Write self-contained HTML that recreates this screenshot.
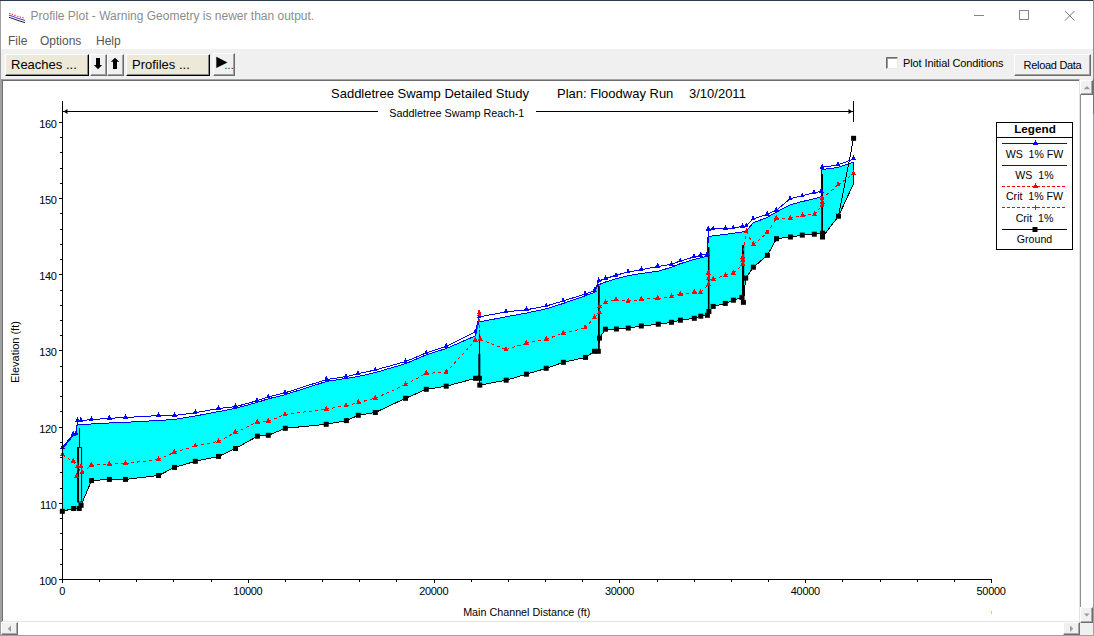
<!DOCTYPE html>
<html lang="en">
<head>
<meta charset="utf-8">
<title>Profile Plot - Warning Geometry is newer than output.</title>
<style>
html,body{margin:0;padding:0;width:1094px;height:636px;overflow:hidden;background:#f0f0f0;}
body{position:relative;font-family:"Liberation Sans",Arial,sans-serif;color:#000;}
#win{position:absolute;left:0;top:0;width:1094px;height:636px;background:#f0f0f0;overflow:hidden;}
#titlebar{position:absolute;left:0;top:0;width:1094px;height:31px;background:#fff;border-top:1px solid #2b3a4a;box-sizing:border-box;}
#title{position:absolute;left:30.5px;top:8px;font-size:12px;line-height:14px;color:#8c8c8c;white-space:nowrap;}
#menubar{position:absolute;left:0;top:31px;width:1094px;height:18px;background:#fff;}
#menubar span{position:absolute;top:3px;font-size:12px;line-height:14px;color:#555;}
#toolbar{position:absolute;left:0;top:49px;width:1094px;height:30px;background:#f0f0f0;}
.btn{position:absolute;box-sizing:border-box;background:#ece9d8;border:1px solid;border-color:#fff #000 #000 #fff;box-shadow:inset -1px -1px 0 #8a8a8a;font-size:13px;line-height:19px;white-space:nowrap;}
.sbtn{position:absolute;box-sizing:border-box;background:#f0f0f0;border:1px solid;border-color:#fff #6d6d6d #6d6d6d #fff;box-shadow:inset -1px -1px 0 #a0a0a0;}
#plotwrap{position:absolute;left:2px;top:79px;width:1078px;height:543px;background:#fff;box-sizing:border-box;border-top:1px solid #a4a4a4;border-left:1px solid #6e6e6e;border-right:1.4px solid #e3e3e3;box-shadow:inset 0 1px 0 #6e6e6e;}
.sb{position:absolute;background:#fff;}
.sbb{position:absolute;box-sizing:border-box;background:#f0f0f0;border:1px solid;border-color:#fff #6e6e6e #6e6e6e #fff;box-shadow:inset -1px -1px 0 #a8a8a8;}
</style>
</head>
<body>
<div id="win">
<div id="titlebar">
<svg style="position:absolute;left:8px;top:9px" width="18" height="14" viewBox="0 0 18 14"><path d="M1 3.2l4 1.3l4 1.5l4 1.2l4 1.2" stroke="#ff3030" stroke-width="1.1" fill="none" stroke-dasharray="1.5 1.3"/><path d="M1 5.2l4 1.2l4 1.6l4 1.2l4 1.3" stroke="#3838f0" stroke-width="1" fill="none"/><path d="M1 7.3l4 1.3l4 1.5l4 1.3l4 1.2" stroke="#222" stroke-width="1" fill="none"/></svg>
<div id="title">Profile Plot - Warning Geometry is newer than output.</div>
<svg style="position:absolute;left:960px;top:0" width="134" height="30" viewBox="960 0 134 30" fill="none" stroke="#858585" stroke-width="1" shape-rendering="crispEdges"><line x1="974" y1="14.5" x2="984" y2="14.5"/><rect x="1019.5" y="9.5" width="9" height="9"/><path d="M1065 10l9.5 9.5M1074.5 10l-9.5 9.5" shape-rendering="auto" stroke="#777"/></svg>
</div>
<div id="menubar"><span style="left:8px">File</span><span style="left:40px">Options</span><span style="left:96px">Help</span></div>
<div id="toolbar">
<div class="btn" style="left:5px;top:5px;width:84px;height:22px;padding-left:5px">Reaches ...</div>
<div class="sbtn" style="left:90px;top:5px;width:17px;height:22px"><svg width="15" height="20" viewBox="0 0 15 20" style="display:block"><path d="M5 2.9h4v7.2h2.1l-4.1 4.1l-4.1-4.1h2.1z" fill="#000"/></svg></div>
<div class="sbtn" style="left:107px;top:5px;width:17px;height:22px"><svg width="15" height="20" viewBox="0 0 15 20" style="display:block"><path d="M7 2.8l4.2 4h-2.2v7.2h-4v-7.2h-2.2z" fill="#000"/></svg></div>
<div class="btn" style="left:126px;top:5px;width:84px;height:22px;padding-left:5px">Profiles ...</div>
<div class="sbtn" style="left:213px;top:4px;width:22px;height:23px"><svg width="20" height="21" viewBox="0 0 20 21" style="display:block"><path d="M2.3 2.8l11.2 5.6l-11.2 5.6z" fill="#000"/><text x="10.6" y="15.2" font-size="10" letter-spacing="0.25" font-family="'Liberation Sans',sans-serif" fill="#000">...</text></svg></div>
<div style="position:absolute;left:886px;top:8px;width:12px;height:12px;box-sizing:border-box;background:#fff;border:1px solid;border-color:#6a6a6a #e8e8e8 #e8e8e8 #6a6a6a;box-shadow:inset 1px 1px 0 #9a9a9a"></div>
<div style="position:absolute;left:903px;top:7.6px;font-size:11px;line-height:13px;white-space:nowrap;letter-spacing:-0.1px">Plot Initial Conditions</div>
<div class="sbtn" style="left:1014px;top:5px;width:77px;height:22px;font-size:11px;line-height:20px;text-align:center;letter-spacing:-0.3px">Reload Data</div>
</div>
<div id="plotwrap"></div>
<svg id="plot" width="1075" height="541" viewBox="3 81 1075 541" style="position:absolute;left:3px;top:81px" font-family="'Liberation Sans',Arial,sans-serif">
<polygon points="62.5,449.0 73.2,435.5 75.9,435.0 77.3,424.3 91.3,424.0 109.3,423.0 125.5,422.3 158.5,420.5 174.5,419.4 195.3,416.0 218.5,411.6 235.3,408.4 257.2,402.4 268.3,398.8 285.0,394.7 326.3,381.5 346.2,378.4 358.2,376.5 375.2,372.6 405.5,363.7 426.2,354.9 446.2,348.5 475.2,336.0 478.8,322.0 506.1,316.8 526.4,313.1 546.2,308.8 563.1,303.5 585.1,295.8 594.5,292.5 597.5,286.4 598.5,284.8 605.5,282.0 616.0,278.7 628.1,275.7 641.3,273.5 658.3,271.2 671.5,267.2 680.3,263.7 694.0,259.5 707.2,256.2 708.4,236.4 725.4,234.4 742.5,232.0 746.3,230.9 753.3,222.8 767.1,217.5 776.4,212.0 790.2,204.8 802.3,201.5 814.2,198.8 821.3,196.6 822.0,169.6 838.1,167.4 853.5,162.1 853.5,183.7 838.5,216.2 838.5,216.2 822.5,237.0 822.5,233.2 814.3,234.2 802.3,235.1 790.4,237.0 776.5,238.7 767.4,255.3 753.4,267.2 745.7,278.1 743.4,302.3 741.9,297.4 733.4,300.2 725.3,303.4 713.2,306.4 708.9,311.5 707.4,315.3 700.8,316.2 694.3,318.3 680.4,320.2 671.5,322.3 658.3,324.2 641.3,326.0 628.3,328.1 616.4,329.0 605.4,329.2 599.5,338.1 598.3,351.3 594.5,351.3 585.5,357.4 563.4,362.3 546.2,368.3 526.4,374.2 506.2,380.2 479.8,385.1 479.4,378.3 475.5,378.3 446.2,386.2 426.3,389.3 405.5,398.3 375.3,412.5 358.3,415.3 346.4,420.6 326.2,424.3 285.3,428.3 268.3,435.3 257.4,436.2 235.5,448.5 218.5,456.4 195.3,461.3 174.5,467.4 158.5,475.5 125.5,479.4 109.4,479.4 91.5,480.6 81.1,505.3 79.2,508.5 73.6,508.5 62.3,511.3" fill="#00ffff"/>
<polyline points="853.5,162.1 853.5,183.7 838.5,216.2" fill="none" stroke="#000" stroke-width="1" shape-rendering="crispEdges"/>
<polyline points="62.5,449.0 73.2,435.5 75.9,435.0 77.3,424.3 91.3,424.0 109.3,423.0 125.5,422.3 158.5,420.5 174.5,419.4 195.3,416.0 218.5,411.6 235.3,408.4 257.2,402.4 268.3,398.8 285.0,394.7 326.3,381.5 346.2,378.4 358.2,376.5 375.2,372.6 405.5,363.7 426.2,354.9 446.2,348.5 475.2,336.0 478.8,322.0 506.1,316.8 526.4,313.1 546.2,308.8 563.1,303.5 585.1,295.8 594.5,292.5 597.5,286.4 598.5,284.8 605.5,282.0 616.0,278.7 628.1,275.7 641.3,273.5 658.3,271.2 671.5,267.2 680.3,263.7 694.0,259.5 707.2,256.2 708.4,236.4 725.4,234.4 742.5,232.0 746.3,230.9 753.3,222.8 767.1,217.5 776.4,212.0 790.2,204.8 802.3,201.5 814.2,198.8 821.3,196.6 822.0,169.6 838.1,167.4 853.5,162.1" fill="none" stroke="#0000ff" stroke-width="1" shape-rendering="crispEdges"/>
<polyline points="62.5,447.6 73.2,434.0 75.9,433.5 77.6,420.5 80.9,420.4 91.3,419.7 109.3,418.3 125.5,417.5 158.5,415.6 174.5,415.5 195.3,412.7 218.5,408.5 235.3,406.7 257.2,400.7 268.3,396.8 285.0,392.8 326.3,379.6 346.2,376.6 358.2,373.7 375.2,370.0 405.5,361.6 426.2,352.9 446.2,346.3 475.2,332.0 479.1,317.0 506.1,311.8 526.4,309.8 546.2,306.0 563.1,301.0 585.1,294.0 594.5,291.0 598.6,281.0 605.5,278.7 616.0,275.2 628.1,272.0 641.3,269.7 657.8,266.5 671.5,264.2 680.3,261.0 694.0,257.0 700.6,255.3 707.2,254.2 708.4,229.2 713.3,228.8 725.4,228.6 733.3,228.0 742.5,226.5 746.3,226.0 753.2,218.8 767.3,214.3 776.4,210.2 790.2,198.8 802.3,195.8 814.2,192.7 821.3,191.3 822.1,167.3 838.1,164.9 853.5,159.0" fill="none" stroke="#0000ff" stroke-width="1" shape-rendering="crispEdges"/>
<line x1="479.5" y1="330" x2="479.5" y2="378" stroke="#000" stroke-width="1.1"/>
<line x1="479.3" y1="354" x2="479.3" y2="378" stroke="#000" stroke-width="2"/>
<line x1="598.9" y1="286" x2="598.9" y2="351" stroke="#000" stroke-width="1.8"/>
<line x1="708.7" y1="247" x2="708.7" y2="314" stroke="#000" stroke-width="1.6"/>
<line x1="743.1" y1="245" x2="743.1" y2="302" stroke="#000" stroke-width="2.2"/>
<line x1="822.1" y1="174" x2="822.1" y2="234" stroke="#000" stroke-width="1.8"/>
<line x1="79.5" y1="428" x2="79.5" y2="447" stroke="#000" stroke-width="1.1"/>
<path d="M78 447.5h3.6v54.5h-3.6z" fill="none" stroke="#000" stroke-width="1"/>
<line x1="78" y1="447" x2="78" y2="502.5" stroke="#000" stroke-width="1.8"/>
<path d="M62.5 454.9L73.2 461.3M73.2 461.3L77.6 466.7M77.6 466.7L76.4 476.7M76.4 476.7L80.9 466.7M80.9 466.7L82.0 472.4M82.0 472.4L91.3 465.3M91.3 465.3L109.3 464.2M109.3 464.2L125.5 463.4M125.5 463.4L158.4 459.6M158.4 459.6L174.3 452.3M174.3 452.3L195.3 446.0M195.3 446.0L218.5 441.3M218.5 441.3L235.3 432.5M235.3 432.5L257.2 422.2M257.2 422.2L268.3 421.4M268.3 421.4L285.0 414.5M285.0 414.5L326.3 409.2M326.3 409.2L346.2 405.6M346.2 405.6L358.3 402.6M358.3 402.6L375.3 398.2M375.3 398.2L405.5 384.7M405.5 384.7L426.2 373.3M426.2 373.3L446.2 372.5M446.2 372.5L475.2 340.3M475.2 340.3L479.1 315.0M479.1 315.0L479.1 313.0M479.1 313.0L480.2 339.2M480.2 339.2L506.1 349.6M506.1 349.6L526.4 343.2M526.4 343.2L546.2 339.2M546.2 339.2L563.2 333.2M563.2 333.2L585.1 328.0M585.1 328.0L594.5 317.3M594.5 317.3L599.5 312.4M599.5 312.4L599.5 306.9M599.5 306.9L605.5 302.5M605.5 302.5L616.0 299.7M616.0 299.7L628.1 301.3M628.1 301.3L641.3 299.3M641.3 299.3L657.8 298.5M657.8 298.5L671.5 296.2M671.5 296.2L680.4 294.3M680.4 294.3L694.4 292.4M694.4 292.4L700.5 292.4M700.5 292.4L708.5 284.7M708.5 284.7L708.4 278.7M708.4 278.7L708.4 273.2M708.4 273.2L713.4 279.2M713.4 279.2L725.5 275.4M725.5 275.4L733.2 273.2M733.2 273.2L742.8 264.4M742.8 264.4L742.8 260.5M742.8 260.5L742.8 257.2M742.8 257.2L746.3 231.7M746.3 231.7L753.4 244.6M753.4 244.6L767.2 232.7M767.2 232.7L776.4 218.2M776.4 218.2L790.4 218.2M790.4 218.2L802.5 215.3M802.5 215.3L814.4 214.5M814.4 214.5L822.1 205.3M822.1 205.3L822.1 202.2M822.1 202.2L822.1 198.9M822.1 198.9L838.2 184.8M838.2 184.8L853.5 173.7" fill="none" stroke="#ff0000" stroke-width="1" stroke-dasharray="3 3" shape-rendering="crispEdges"/>
<polyline points="62.3,511.3 73.6,508.5 79.2,508.5 81.1,505.3 91.5,480.6 109.4,479.4 125.5,479.4 158.5,475.5 174.5,467.4 195.3,461.3 218.5,456.4 235.5,448.5 257.4,436.2 268.3,435.3 285.3,428.3 326.2,424.3 346.4,420.6 358.3,415.3 375.3,412.5 405.5,398.3 426.3,389.3 446.2,386.2 475.5,378.3 479.4,378.3 479.8,385.1 506.2,380.2 526.4,374.2 546.2,368.3 563.4,362.3 585.5,357.4 594.5,351.3 598.3,351.3 599.5,338.1 605.4,329.2 616.4,329.0 628.3,328.1 641.3,326.0 658.3,324.2 671.5,322.3 680.4,320.2 694.3,318.3 700.8,316.2 707.4,315.3 708.9,311.5 713.2,306.4 725.3,303.4 733.4,300.2 741.9,297.4 743.4,302.3 745.7,278.1 753.4,267.2 767.4,255.3 776.5,238.7 790.4,237.0 802.3,235.1 814.3,234.2 822.5,233.2 822.5,237.0 838.5,216.2 853.6,138.3" fill="none" stroke="#000" stroke-width="1" shape-rendering="crispEdges"/>
<path d="M60.0 449.0L62.5 443.9L65.0 449.0Z" fill="#0000ff" shape-rendering="crispEdges"/>
<path d="M70.7 435.4L73.2 430.3L75.7 435.4Z" fill="#0000ff" shape-rendering="crispEdges"/>
<path d="M73.4 434.9L75.9 429.8L78.4 434.9Z" fill="#0000ff" shape-rendering="crispEdges"/>
<path d="M75.1 421.9L77.6 416.8L80.1 421.9Z" fill="#0000ff" shape-rendering="crispEdges"/>
<path d="M78.4 421.8L80.9 416.7L83.4 421.8Z" fill="#0000ff" shape-rendering="crispEdges"/>
<path d="M88.8 421.1L91.3 416.0L93.8 421.1Z" fill="#0000ff" shape-rendering="crispEdges"/>
<path d="M106.8 419.7L109.3 414.6L111.8 419.7Z" fill="#0000ff" shape-rendering="crispEdges"/>
<path d="M123.0 418.9L125.5 413.8L128.0 418.9Z" fill="#0000ff" shape-rendering="crispEdges"/>
<path d="M156.0 417.0L158.5 411.9L161.0 417.0Z" fill="#0000ff" shape-rendering="crispEdges"/>
<path d="M172.0 416.9L174.5 411.8L177.0 416.9Z" fill="#0000ff" shape-rendering="crispEdges"/>
<path d="M192.8 414.1L195.3 409.0L197.8 414.1Z" fill="#0000ff" shape-rendering="crispEdges"/>
<path d="M216.0 409.9L218.5 404.8L221.0 409.9Z" fill="#0000ff" shape-rendering="crispEdges"/>
<path d="M232.8 408.1L235.3 403.0L237.8 408.1Z" fill="#0000ff" shape-rendering="crispEdges"/>
<path d="M254.7 402.1L257.2 397.0L259.7 402.1Z" fill="#0000ff" shape-rendering="crispEdges"/>
<path d="M265.8 398.2L268.3 393.1L270.8 398.2Z" fill="#0000ff" shape-rendering="crispEdges"/>
<path d="M282.5 394.2L285.0 389.1L287.5 394.2Z" fill="#0000ff" shape-rendering="crispEdges"/>
<path d="M323.8 381.0L326.3 375.9L328.8 381.0Z" fill="#0000ff" shape-rendering="crispEdges"/>
<path d="M343.7 378.0L346.2 372.9L348.7 378.0Z" fill="#0000ff" shape-rendering="crispEdges"/>
<path d="M355.7 375.1L358.2 370.0L360.7 375.1Z" fill="#0000ff" shape-rendering="crispEdges"/>
<path d="M372.7 371.4L375.2 366.3L377.7 371.4Z" fill="#0000ff" shape-rendering="crispEdges"/>
<path d="M403.0 363.0L405.5 357.9L408.0 363.0Z" fill="#0000ff" shape-rendering="crispEdges"/>
<path d="M423.7 354.3L426.2 349.2L428.7 354.3Z" fill="#0000ff" shape-rendering="crispEdges"/>
<path d="M443.7 347.7L446.2 342.6L448.7 347.7Z" fill="#0000ff" shape-rendering="crispEdges"/>
<path d="M472.7 333.4L475.2 328.3L477.7 333.4Z" fill="#0000ff" shape-rendering="crispEdges"/>
<path d="M476.6 318.4L479.1 313.3L481.6 318.4Z" fill="#0000ff" shape-rendering="crispEdges"/>
<path d="M503.6 313.2L506.1 308.1L508.6 313.2Z" fill="#0000ff" shape-rendering="crispEdges"/>
<path d="M523.9 311.2L526.4 306.1L528.9 311.2Z" fill="#0000ff" shape-rendering="crispEdges"/>
<path d="M543.7 307.4L546.2 302.3L548.7 307.4Z" fill="#0000ff" shape-rendering="crispEdges"/>
<path d="M560.6 302.4L563.1 297.3L565.6 302.4Z" fill="#0000ff" shape-rendering="crispEdges"/>
<path d="M582.6 295.4L585.1 290.3L587.6 295.4Z" fill="#0000ff" shape-rendering="crispEdges"/>
<path d="M592.0 292.4L594.5 287.3L597.0 292.4Z" fill="#0000ff" shape-rendering="crispEdges"/>
<path d="M596.1 282.4L598.6 277.3L601.1 282.4Z" fill="#0000ff" shape-rendering="crispEdges"/>
<path d="M603.0 280.1L605.5 275.0L608.0 280.1Z" fill="#0000ff" shape-rendering="crispEdges"/>
<path d="M613.5 276.6L616.0 271.5L618.5 276.6Z" fill="#0000ff" shape-rendering="crispEdges"/>
<path d="M625.6 273.4L628.1 268.3L630.6 273.4Z" fill="#0000ff" shape-rendering="crispEdges"/>
<path d="M638.8 271.1L641.3 266.0L643.8 271.1Z" fill="#0000ff" shape-rendering="crispEdges"/>
<path d="M655.3 267.9L657.8 262.8L660.3 267.9Z" fill="#0000ff" shape-rendering="crispEdges"/>
<path d="M669.0 265.6L671.5 260.5L674.0 265.6Z" fill="#0000ff" shape-rendering="crispEdges"/>
<path d="M677.8 262.4L680.3 257.3L682.8 262.4Z" fill="#0000ff" shape-rendering="crispEdges"/>
<path d="M691.5 258.4L694.0 253.3L696.5 258.4Z" fill="#0000ff" shape-rendering="crispEdges"/>
<path d="M698.1 256.7L700.6 251.6L703.1 256.7Z" fill="#0000ff" shape-rendering="crispEdges"/>
<path d="M704.7 255.6L707.2 250.5L709.7 255.6Z" fill="#0000ff" shape-rendering="crispEdges"/>
<path d="M705.9 230.6L708.4 225.5L710.9 230.6Z" fill="#0000ff" shape-rendering="crispEdges"/>
<path d="M710.8 230.2L713.3 225.1L715.8 230.2Z" fill="#0000ff" shape-rendering="crispEdges"/>
<path d="M722.9 230.0L725.4 224.9L727.9 230.0Z" fill="#0000ff" shape-rendering="crispEdges"/>
<path d="M730.8 229.4L733.3 224.3L735.8 229.4Z" fill="#0000ff" shape-rendering="crispEdges"/>
<path d="M740.0 227.9L742.5 222.8L745.0 227.9Z" fill="#0000ff" shape-rendering="crispEdges"/>
<path d="M743.8 227.4L746.3 222.3L748.8 227.4Z" fill="#0000ff" shape-rendering="crispEdges"/>
<path d="M750.7 220.2L753.2 215.1L755.7 220.2Z" fill="#0000ff" shape-rendering="crispEdges"/>
<path d="M764.8 215.7L767.3 210.6L769.8 215.7Z" fill="#0000ff" shape-rendering="crispEdges"/>
<path d="M773.9 211.6L776.4 206.5L778.9 211.6Z" fill="#0000ff" shape-rendering="crispEdges"/>
<path d="M787.7 200.2L790.2 195.1L792.7 200.2Z" fill="#0000ff" shape-rendering="crispEdges"/>
<path d="M799.8 197.2L802.3 192.1L804.8 197.2Z" fill="#0000ff" shape-rendering="crispEdges"/>
<path d="M811.7 194.1L814.2 189.0L816.7 194.1Z" fill="#0000ff" shape-rendering="crispEdges"/>
<path d="M818.8 192.7L821.3 187.6L823.8 192.7Z" fill="#0000ff" shape-rendering="crispEdges"/>
<path d="M819.6 168.7L822.1 163.6L824.6 168.7Z" fill="#0000ff" shape-rendering="crispEdges"/>
<path d="M835.6 166.3L838.1 161.2L840.6 166.3Z" fill="#0000ff" shape-rendering="crispEdges"/>
<path d="M851.0 160.4L853.5 155.3L856.0 160.4Z" fill="#0000ff" shape-rendering="crispEdges"/>
<path d="M60.0 456.3L62.5 451.2L65.0 456.3Z" fill="#ff0000" shape-rendering="crispEdges"/>
<path d="M70.7 462.7L73.2 457.6L75.7 462.7Z" fill="#ff0000" shape-rendering="crispEdges"/>
<path d="M75.1 468.1L77.6 463.0L80.1 468.1Z" fill="#ff0000" shape-rendering="crispEdges"/>
<path d="M73.9 478.1L76.4 473.0L78.9 478.1Z" fill="#ff0000" shape-rendering="crispEdges"/>
<path d="M78.4 468.1L80.9 463.0L83.4 468.1Z" fill="#ff0000" shape-rendering="crispEdges"/>
<path d="M79.5 473.8L82.0 468.7L84.5 473.8Z" fill="#ff0000" shape-rendering="crispEdges"/>
<path d="M88.8 466.7L91.3 461.6L93.8 466.7Z" fill="#ff0000" shape-rendering="crispEdges"/>
<path d="M106.8 465.6L109.3 460.5L111.8 465.6Z" fill="#ff0000" shape-rendering="crispEdges"/>
<path d="M123.0 464.8L125.5 459.7L128.0 464.8Z" fill="#ff0000" shape-rendering="crispEdges"/>
<path d="M155.9 461.0L158.4 455.9L160.9 461.0Z" fill="#ff0000" shape-rendering="crispEdges"/>
<path d="M171.8 453.7L174.3 448.6L176.8 453.7Z" fill="#ff0000" shape-rendering="crispEdges"/>
<path d="M192.8 447.4L195.3 442.3L197.8 447.4Z" fill="#ff0000" shape-rendering="crispEdges"/>
<path d="M216.0 442.7L218.5 437.6L221.0 442.7Z" fill="#ff0000" shape-rendering="crispEdges"/>
<path d="M232.8 433.9L235.3 428.8L237.8 433.9Z" fill="#ff0000" shape-rendering="crispEdges"/>
<path d="M254.7 423.6L257.2 418.5L259.7 423.6Z" fill="#ff0000" shape-rendering="crispEdges"/>
<path d="M265.8 422.8L268.3 417.7L270.8 422.8Z" fill="#ff0000" shape-rendering="crispEdges"/>
<path d="M282.5 415.9L285.0 410.8L287.5 415.9Z" fill="#ff0000" shape-rendering="crispEdges"/>
<path d="M323.8 410.6L326.3 405.5L328.8 410.6Z" fill="#ff0000" shape-rendering="crispEdges"/>
<path d="M343.7 407.0L346.2 401.9L348.7 407.0Z" fill="#ff0000" shape-rendering="crispEdges"/>
<path d="M355.8 404.0L358.3 398.9L360.8 404.0Z" fill="#ff0000" shape-rendering="crispEdges"/>
<path d="M372.8 399.6L375.3 394.5L377.8 399.6Z" fill="#ff0000" shape-rendering="crispEdges"/>
<path d="M403.0 386.1L405.5 381.0L408.0 386.1Z" fill="#ff0000" shape-rendering="crispEdges"/>
<path d="M423.7 374.7L426.2 369.6L428.7 374.7Z" fill="#ff0000" shape-rendering="crispEdges"/>
<path d="M443.7 373.9L446.2 368.8L448.7 373.9Z" fill="#ff0000" shape-rendering="crispEdges"/>
<path d="M472.7 341.7L475.2 336.6L477.7 341.7Z" fill="#ff0000" shape-rendering="crispEdges"/>
<path d="M476.6 316.4L479.1 311.3L481.6 316.4Z" fill="#ff0000" shape-rendering="crispEdges"/>
<path d="M476.6 314.4L479.1 309.3L481.6 314.4Z" fill="#ff0000" shape-rendering="crispEdges"/>
<path d="M477.7 340.6L480.2 335.5L482.7 340.6Z" fill="#ff0000" shape-rendering="crispEdges"/>
<path d="M503.6 351.0L506.1 345.9L508.6 351.0Z" fill="#ff0000" shape-rendering="crispEdges"/>
<path d="M523.9 344.6L526.4 339.5L528.9 344.6Z" fill="#ff0000" shape-rendering="crispEdges"/>
<path d="M543.7 340.6L546.2 335.5L548.7 340.6Z" fill="#ff0000" shape-rendering="crispEdges"/>
<path d="M560.7 334.6L563.2 329.5L565.7 334.6Z" fill="#ff0000" shape-rendering="crispEdges"/>
<path d="M582.6 329.4L585.1 324.3L587.6 329.4Z" fill="#ff0000" shape-rendering="crispEdges"/>
<path d="M592.0 318.7L594.5 313.6L597.0 318.7Z" fill="#ff0000" shape-rendering="crispEdges"/>
<path d="M597.0 313.8L599.5 308.7L602.0 313.8Z" fill="#ff0000" shape-rendering="crispEdges"/>
<path d="M597.0 308.3L599.5 303.2L602.0 308.3Z" fill="#ff0000" shape-rendering="crispEdges"/>
<path d="M603.0 303.9L605.5 298.8L608.0 303.9Z" fill="#ff0000" shape-rendering="crispEdges"/>
<path d="M613.5 301.1L616.0 296.0L618.5 301.1Z" fill="#ff0000" shape-rendering="crispEdges"/>
<path d="M625.6 302.7L628.1 297.6L630.6 302.7Z" fill="#ff0000" shape-rendering="crispEdges"/>
<path d="M638.8 300.7L641.3 295.6L643.8 300.7Z" fill="#ff0000" shape-rendering="crispEdges"/>
<path d="M655.3 299.9L657.8 294.8L660.3 299.9Z" fill="#ff0000" shape-rendering="crispEdges"/>
<path d="M669.0 297.6L671.5 292.5L674.0 297.6Z" fill="#ff0000" shape-rendering="crispEdges"/>
<path d="M677.9 295.7L680.4 290.6L682.9 295.7Z" fill="#ff0000" shape-rendering="crispEdges"/>
<path d="M691.9 293.8L694.4 288.7L696.9 293.8Z" fill="#ff0000" shape-rendering="crispEdges"/>
<path d="M698.0 293.8L700.5 288.7L703.0 293.8Z" fill="#ff0000" shape-rendering="crispEdges"/>
<path d="M706.0 286.1L708.5 281.0L711.0 286.1Z" fill="#ff0000" shape-rendering="crispEdges"/>
<path d="M705.9 280.1L708.4 275.0L710.9 280.1Z" fill="#ff0000" shape-rendering="crispEdges"/>
<path d="M705.9 274.6L708.4 269.5L710.9 274.6Z" fill="#ff0000" shape-rendering="crispEdges"/>
<path d="M710.9 280.6L713.4 275.5L715.9 280.6Z" fill="#ff0000" shape-rendering="crispEdges"/>
<path d="M723.0 276.8L725.5 271.7L728.0 276.8Z" fill="#ff0000" shape-rendering="crispEdges"/>
<path d="M730.7 274.6L733.2 269.5L735.7 274.6Z" fill="#ff0000" shape-rendering="crispEdges"/>
<path d="M740.3 265.8L742.8 260.7L745.3 265.8Z" fill="#ff0000" shape-rendering="crispEdges"/>
<path d="M740.3 261.9L742.8 256.8L745.3 261.9Z" fill="#ff0000" shape-rendering="crispEdges"/>
<path d="M740.3 258.6L742.8 253.5L745.3 258.6Z" fill="#ff0000" shape-rendering="crispEdges"/>
<path d="M743.8 233.1L746.3 228.0L748.8 233.1Z" fill="#ff0000" shape-rendering="crispEdges"/>
<path d="M750.9 246.0L753.4 240.9L755.9 246.0Z" fill="#ff0000" shape-rendering="crispEdges"/>
<path d="M764.7 234.1L767.2 229.0L769.7 234.1Z" fill="#ff0000" shape-rendering="crispEdges"/>
<path d="M773.9 219.6L776.4 214.5L778.9 219.6Z" fill="#ff0000" shape-rendering="crispEdges"/>
<path d="M787.9 219.6L790.4 214.5L792.9 219.6Z" fill="#ff0000" shape-rendering="crispEdges"/>
<path d="M800.0 216.7L802.5 211.6L805.0 216.7Z" fill="#ff0000" shape-rendering="crispEdges"/>
<path d="M811.9 215.9L814.4 210.8L816.9 215.9Z" fill="#ff0000" shape-rendering="crispEdges"/>
<path d="M819.6 206.7L822.1 201.6L824.6 206.7Z" fill="#ff0000" shape-rendering="crispEdges"/>
<path d="M819.6 203.6L822.1 198.5L824.6 203.6Z" fill="#ff0000" shape-rendering="crispEdges"/>
<path d="M819.6 200.3L822.1 195.2L824.6 200.3Z" fill="#ff0000" shape-rendering="crispEdges"/>
<path d="M835.7 186.2L838.2 181.1L840.7 186.2Z" fill="#ff0000" shape-rendering="crispEdges"/>
<path d="M851.0 175.1L853.5 170.0L856.0 175.1Z" fill="#ff0000" shape-rendering="crispEdges"/>
<rect x="59.8" y="508.8" width="5" height="5" fill="#000"/>
<rect x="71.1" y="506.0" width="5" height="5" fill="#000"/>
<rect x="76.7" y="506.0" width="5" height="5" fill="#000"/>
<rect x="78.6" y="502.8" width="5" height="5" fill="#000"/>
<rect x="89.0" y="478.1" width="5" height="5" fill="#000"/>
<rect x="106.9" y="476.9" width="5" height="5" fill="#000"/>
<rect x="123.0" y="476.9" width="5" height="5" fill="#000"/>
<rect x="156.0" y="473.0" width="5" height="5" fill="#000"/>
<rect x="172.0" y="464.9" width="5" height="5" fill="#000"/>
<rect x="192.8" y="458.8" width="5" height="5" fill="#000"/>
<rect x="216.0" y="453.9" width="5" height="5" fill="#000"/>
<rect x="233.0" y="446.0" width="5" height="5" fill="#000"/>
<rect x="254.9" y="433.7" width="5" height="5" fill="#000"/>
<rect x="265.8" y="432.8" width="5" height="5" fill="#000"/>
<rect x="282.8" y="425.8" width="5" height="5" fill="#000"/>
<rect x="323.7" y="421.8" width="5" height="5" fill="#000"/>
<rect x="343.9" y="418.1" width="5" height="5" fill="#000"/>
<rect x="355.8" y="412.8" width="5" height="5" fill="#000"/>
<rect x="372.8" y="410.0" width="5" height="5" fill="#000"/>
<rect x="403.0" y="395.8" width="5" height="5" fill="#000"/>
<rect x="423.8" y="386.8" width="5" height="5" fill="#000"/>
<rect x="443.7" y="383.7" width="5" height="5" fill="#000"/>
<rect x="473.0" y="375.8" width="5" height="5" fill="#000"/>
<rect x="476.9" y="375.8" width="5" height="5" fill="#000"/>
<rect x="477.3" y="382.6" width="5" height="5" fill="#000"/>
<rect x="503.7" y="377.7" width="5" height="5" fill="#000"/>
<rect x="523.9" y="371.7" width="5" height="5" fill="#000"/>
<rect x="543.7" y="365.8" width="5" height="5" fill="#000"/>
<rect x="560.9" y="359.8" width="5" height="5" fill="#000"/>
<rect x="583.0" y="354.9" width="5" height="5" fill="#000"/>
<rect x="592.0" y="348.8" width="5" height="5" fill="#000"/>
<rect x="595.8" y="348.8" width="5" height="5" fill="#000"/>
<rect x="597.0" y="335.6" width="5" height="5" fill="#000"/>
<rect x="602.9" y="326.7" width="5" height="5" fill="#000"/>
<rect x="613.9" y="326.5" width="5" height="5" fill="#000"/>
<rect x="625.8" y="325.6" width="5" height="5" fill="#000"/>
<rect x="638.8" y="323.5" width="5" height="5" fill="#000"/>
<rect x="655.8" y="321.7" width="5" height="5" fill="#000"/>
<rect x="669.0" y="319.8" width="5" height="5" fill="#000"/>
<rect x="677.9" y="317.7" width="5" height="5" fill="#000"/>
<rect x="691.8" y="315.8" width="5" height="5" fill="#000"/>
<rect x="698.3" y="313.7" width="5" height="5" fill="#000"/>
<rect x="704.9" y="312.8" width="5" height="5" fill="#000"/>
<rect x="706.4" y="309.0" width="5" height="5" fill="#000"/>
<rect x="710.7" y="303.9" width="5" height="5" fill="#000"/>
<rect x="722.8" y="300.9" width="5" height="5" fill="#000"/>
<rect x="730.9" y="297.7" width="5" height="5" fill="#000"/>
<rect x="739.4" y="294.9" width="5" height="5" fill="#000"/>
<rect x="740.9" y="299.8" width="5" height="5" fill="#000"/>
<rect x="743.2" y="275.6" width="5" height="5" fill="#000"/>
<rect x="750.9" y="264.7" width="5" height="5" fill="#000"/>
<rect x="764.9" y="252.8" width="5" height="5" fill="#000"/>
<rect x="774.0" y="236.2" width="5" height="5" fill="#000"/>
<rect x="787.9" y="234.5" width="5" height="5" fill="#000"/>
<rect x="799.8" y="232.6" width="5" height="5" fill="#000"/>
<rect x="811.8" y="231.7" width="5" height="5" fill="#000"/>
<rect x="820.0" y="230.7" width="5" height="5" fill="#000"/>
<rect x="820.0" y="234.5" width="5" height="5" fill="#000"/>
<rect x="836.0" y="213.7" width="5" height="5" fill="#000"/>
<rect x="851.1" y="135.8" width="5" height="5" fill="#000"/>
<g stroke="#000" stroke-width="1" shape-rendering="crispEdges" fill="none">
<line x1="62.5" y1="101" x2="62.5" y2="583"/>
<line x1="59" y1="579.5" x2="992" y2="579.5"/>
<line x1="59" y1="579.5" x2="62" y2="579.5"/>
<line x1="60" y1="564.5" x2="62" y2="564.5"/>
<line x1="60" y1="549.5" x2="62" y2="549.5"/>
<line x1="60" y1="533.5" x2="62" y2="533.5"/>
<line x1="60" y1="518.5" x2="62" y2="518.5"/>
<line x1="59" y1="503.5" x2="62" y2="503.5"/>
<line x1="60" y1="488.5" x2="62" y2="488.5"/>
<line x1="60" y1="472.5" x2="62" y2="472.5"/>
<line x1="60" y1="457.5" x2="62" y2="457.5"/>
<line x1="60" y1="442.5" x2="62" y2="442.5"/>
<line x1="59" y1="427.5" x2="62" y2="427.5"/>
<line x1="60" y1="411.5" x2="62" y2="411.5"/>
<line x1="60" y1="396.5" x2="62" y2="396.5"/>
<line x1="60" y1="381.5" x2="62" y2="381.5"/>
<line x1="60" y1="366.5" x2="62" y2="366.5"/>
<line x1="59" y1="350.5" x2="62" y2="350.5"/>
<line x1="60" y1="335.5" x2="62" y2="335.5"/>
<line x1="60" y1="320.5" x2="62" y2="320.5"/>
<line x1="60" y1="305.5" x2="62" y2="305.5"/>
<line x1="60" y1="290.5" x2="62" y2="290.5"/>
<line x1="59" y1="274.5" x2="62" y2="274.5"/>
<line x1="60" y1="259.5" x2="62" y2="259.5"/>
<line x1="60" y1="244.5" x2="62" y2="244.5"/>
<line x1="60" y1="229.5" x2="62" y2="229.5"/>
<line x1="60" y1="213.5" x2="62" y2="213.5"/>
<line x1="59" y1="198.5" x2="62" y2="198.5"/>
<line x1="60" y1="183.5" x2="62" y2="183.5"/>
<line x1="60" y1="168.5" x2="62" y2="168.5"/>
<line x1="60" y1="152.5" x2="62" y2="152.5"/>
<line x1="60" y1="137.5" x2="62" y2="137.5"/>
<line x1="59" y1="122.5" x2="62" y2="122.5"/>
<line x1="62.5" y1="580" x2="62.5" y2="583"/>
<line x1="99.5" y1="580" x2="99.5" y2="582"/>
<line x1="136.5" y1="580" x2="136.5" y2="582"/>
<line x1="173.5" y1="580" x2="173.5" y2="582"/>
<line x1="211.5" y1="580" x2="211.5" y2="582"/>
<line x1="248.5" y1="580" x2="248.5" y2="583"/>
<line x1="285.5" y1="580" x2="285.5" y2="582"/>
<line x1="322.5" y1="580" x2="322.5" y2="582"/>
<line x1="359.5" y1="580" x2="359.5" y2="582"/>
<line x1="396.5" y1="580" x2="396.5" y2="582"/>
<line x1="434.5" y1="580" x2="434.5" y2="583"/>
<line x1="471.5" y1="580" x2="471.5" y2="582"/>
<line x1="508.5" y1="580" x2="508.5" y2="582"/>
<line x1="545.5" y1="580" x2="545.5" y2="582"/>
<line x1="582.5" y1="580" x2="582.5" y2="582"/>
<line x1="619.5" y1="580" x2="619.5" y2="583"/>
<line x1="657.5" y1="580" x2="657.5" y2="582"/>
<line x1="694.5" y1="580" x2="694.5" y2="582"/>
<line x1="731.5" y1="580" x2="731.5" y2="582"/>
<line x1="768.5" y1="580" x2="768.5" y2="582"/>
<line x1="805.5" y1="580" x2="805.5" y2="583"/>
<line x1="842.5" y1="580" x2="842.5" y2="582"/>
<line x1="880.5" y1="580" x2="880.5" y2="582"/>
<line x1="917.5" y1="580" x2="917.5" y2="582"/>
<line x1="954.5" y1="580" x2="954.5" y2="582"/>
<line x1="991.5" y1="580" x2="991.5" y2="583"/>
<line x1="853.5" y1="101" x2="853.5" y2="122"/>
<line x1="63" y1="111.5" x2="378" y2="111.5"/>
<line x1="536" y1="111.5" x2="853" y2="111.5"/>
</g>
<path d="M63.5 111.5l4 -2.5v5z M852.5 111.5l-4 -2.5v5z" fill="#000"/>
<g font-size="11px" fill="#000">
<text x="56.6" y="584.8" text-anchor="end" letter-spacing="-0.3">100</text>
<text x="56.6" y="508.6" text-anchor="end" letter-spacing="-0.3">110</text>
<text x="56.6" y="432.5" text-anchor="end" letter-spacing="-0.3">120</text>
<text x="56.6" y="356.3" text-anchor="end" letter-spacing="-0.3">130</text>
<text x="56.6" y="280.1" text-anchor="end" letter-spacing="-0.3">140</text>
<text x="56.6" y="204.0" text-anchor="end" letter-spacing="-0.3">150</text>
<text x="56.6" y="127.8" text-anchor="end" letter-spacing="-0.3">160</text>
<text x="62.1" y="595" text-anchor="middle" letter-spacing="-0.3">0</text>
<text x="247.9" y="595" text-anchor="middle" letter-spacing="-0.3">10000</text>
<text x="433.7" y="595" text-anchor="middle" letter-spacing="-0.3">20000</text>
<text x="619.5" y="595" text-anchor="middle" letter-spacing="-0.3">30000</text>
<text x="805.3" y="595" text-anchor="middle" letter-spacing="-0.3">40000</text>
<text x="991.1" y="595" text-anchor="middle" letter-spacing="-0.3">50000</text>
<text x="526.8" y="616" text-anchor="middle" font-size="10.75px">Main Channel Distance (ft)</text>
<text transform="translate(19 352) rotate(-90)" text-anchor="middle">Elevation (ft)</text>
<text x="456.8" y="116.5" text-anchor="middle" font-size="10.8px">Saddletree Swamp Reach-1</text>
</g>
<g font-size="13px" fill="#000">
<text x="331" y="98">Saddletree Swamp Detailed Study</text>
<text x="557" y="98">Plan: Floodway Run</text>
<text x="689" y="98">3/10/2011</text>
</g>
<g>
<rect x="996.5" y="122.5" width="76" height="127" fill="#fff" stroke="#000" stroke-width="1" shape-rendering="crispEdges"/>
<line x1="996" y1="137.5" x2="1073" y2="137.5" stroke="#000" shape-rendering="crispEdges"/>
<text x="1035" y="133" font-size="11.7px" font-weight="bold" text-anchor="middle">Legend</text>
<g font-size="10.6px" text-anchor="middle" shape-rendering="crispEdges">
<line x1="1002" y1="143.5" x2="1067" y2="143.5" stroke="#0000ff"/>
<text x="1034.5" y="158" xml:space="preserve">WS  1% FW</text>
<line x1="1002" y1="165.5" x2="1067" y2="165.5" stroke="#0000ff"/>
<text x="1034.5" y="179" xml:space="preserve">WS  1%</text>
<line x1="1002" y1="186.5" x2="1067" y2="186.5" stroke="#ff0000" stroke-dasharray="3 2"/>
<text x="1034.5" y="200" xml:space="preserve">Crit  1% FW</text>
<line x1="1002" y1="207.5" x2="1067" y2="207.5" stroke="#ff0000" stroke-dasharray="3 2"/>
<text x="1034.5" y="222" xml:space="preserve">Crit  1%</text>
<line x1="1002" y1="229.5" x2="1067" y2="229.5" stroke="#000"/>
<text x="1034.5" y="243" xml:space="preserve">Ground</text>
</g>
<path d="M1033.0 144.7L1035.5 139.6L1038.0 144.7Z" fill="#0000ff" shape-rendering="crispEdges"/>
<path d="M1033.0 187.7L1035.5 182.6L1038.0 187.7Z" fill="#ff0000" shape-rendering="crispEdges"/>
<path d="M1032.5 207.5h5M1035 205v5" stroke="#ff0000" stroke-width="1" shape-rendering="crispEdges"/>
<rect x="1032.5" y="227" width="5" height="5" fill="#000"/>
</g>
<rect x="991" y="611" width="1" height="3" fill="#f5d800"/>
</svg>
<div class="sb" style="left:1080px;top:80px;width:13px;height:543px;border-left:1px solid #8e8e8e;box-sizing:border-box"></div>
<div class="sbb" style="left:1080px;top:80px;width:13px;height:15px"><svg width="11" height="13" viewBox="0 0 11 13" style="display:block"><path d="M2.8 8.3l3.2-3.4l3.2 3.4z" fill="#9a9a9a"/></svg></div>
<div class="sbb" style="left:1080px;top:607px;width:13px;height:16px"><svg width="11" height="14" viewBox="0 0 11 14" style="display:block"><path d="M3 5.4l2.8 3l2.8-3z" fill="#9a9a9a"/></svg></div>
<div style="position:absolute;left:1080px;top:623px;width:14px;height:12px;background:#f0f0f0"></div>
<div class="sb" style="left:2px;top:621px;width:1078px;height:14px;border-top:1px solid #e3e3e3;box-sizing:border-box"></div>
<div class="sbb" style="left:1px;top:622px;width:17px;height:13px;z-index:3"><svg width="15" height="11" viewBox="0 0 15 11" style="display:block"><path d="M9 2.6l-3.2 3.2l3.2 3.2z" fill="#9a9a9a"/></svg></div>
<div class="sbb" style="left:1063px;top:622px;width:17px;height:13px"><svg width="15" height="11" viewBox="0 0 15 11" style="display:block"><path d="M6 2.6l3.2 3.2l-3.2 3.2z" fill="#9a9a9a"/></svg></div>
<div style="position:absolute;left:0;top:635px;width:1094px;height:1px;background:#a0a0a0"></div>
<div style="position:absolute;left:0;top:79px;width:2px;height:557px;background:#a0a0a0"></div>
<div style="position:absolute;left:0;top:1px;width:1px;height:78px;background:#a0a0a0"></div>
<div style="position:absolute;left:1093px;top:0;width:1px;height:79px;background:#8e8e8e"></div>
<div style="position:absolute;left:1092.5px;top:79px;width:1.5px;height:557px;background:#a0a0a0"></div>
<div style="position:absolute;left:1092.7px;top:79px;width:1.3px;height:35px;background:#3f7fbf"></div>
</div>
</body>
</html>
